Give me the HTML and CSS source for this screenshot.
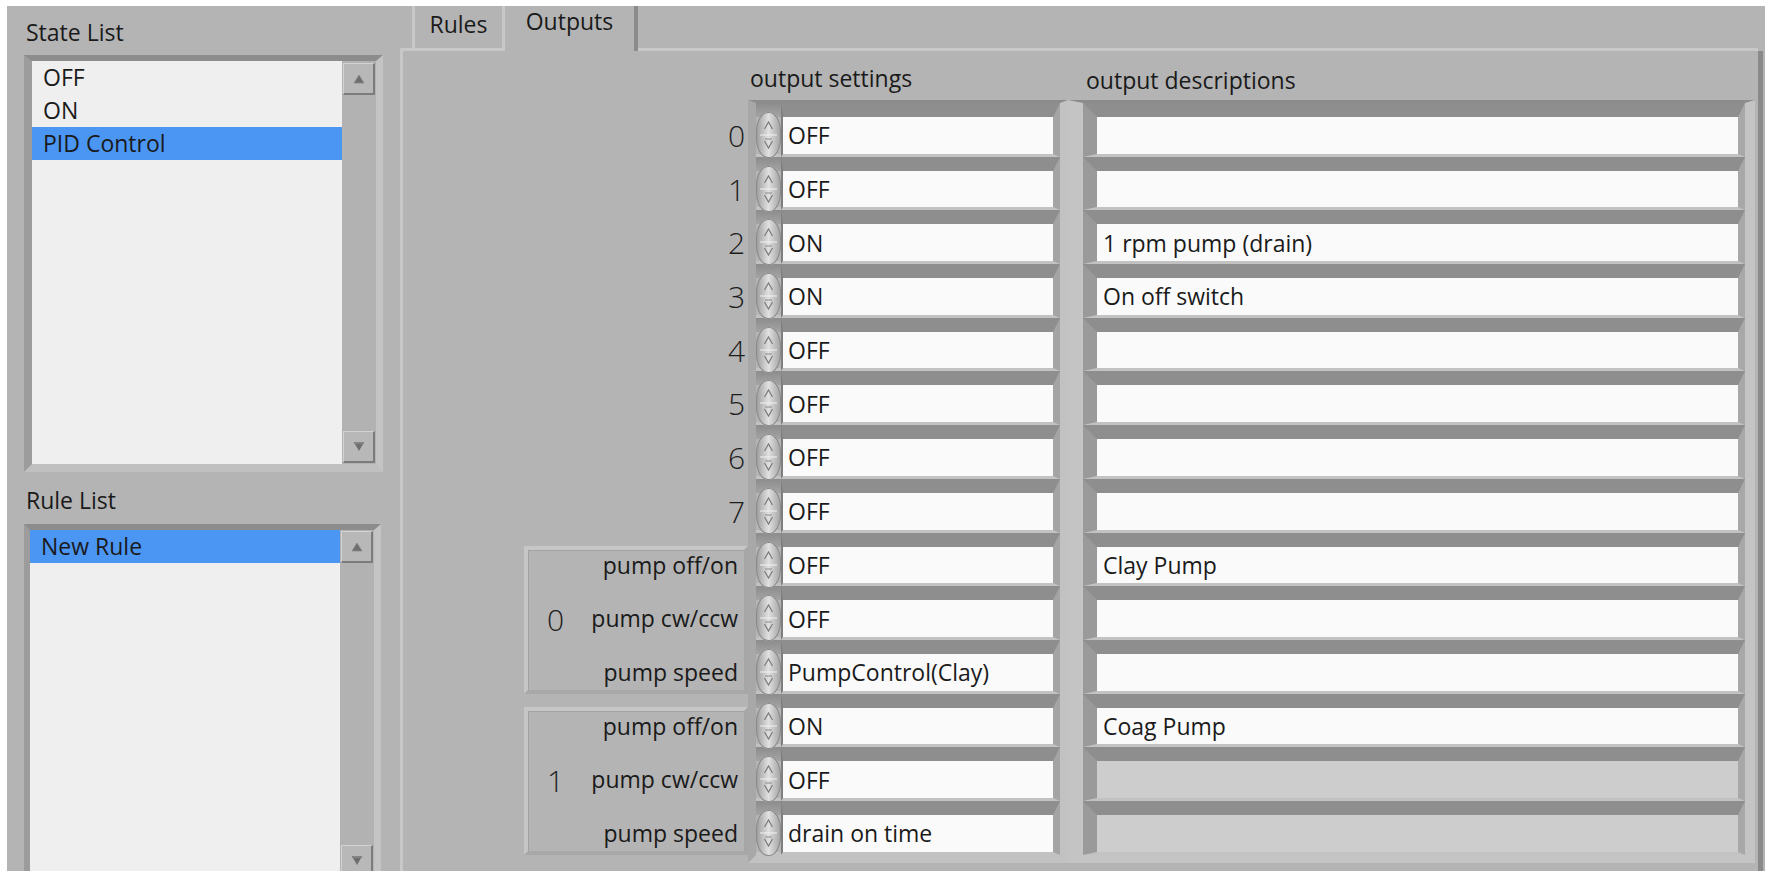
FILE: index.html
```html
<!DOCTYPE html>
<html>
<head>
<meta charset="utf-8">
<link rel="stylesheet" href="styles.css">
</head>
<body>
<div class="screen">
  <div class="left">
    <div class="plabel">State List</div>
    <div class="lframe state">
      <div class="litems">
        <div class="li">OFF</div>
        <div class="li">ON</div>
        <div class="li sel">PID Control</div>
      </div>
      <div class="sbar">
        <div class="sbtn"><svg width="12" height="10" viewBox="0 0 12 10"><polygon points="6,1 11,9 1,9" fill="#6e6e6e" stroke="#8a8a8a" stroke-width="0.8"/></svg></div>
        <div class="sbtn"><svg width="12" height="10" viewBox="0 0 12 10"><line x1="1" y1="1" x2="11" y2="1" stroke="#6e6e6e" stroke-width="1.4"/><polygon points="2,2 10,2 6,9" fill="#6e6e6e"/></svg></div>
      </div>
    </div>
    <div class="plabel rl">Rule List</div>
    <div class="lframe rule">
      <div class="litems">
        <div class="li sel">New Rule</div>
      </div>
      <div class="sbar">
        <div class="sbtn"><svg width="12" height="10" viewBox="0 0 12 10"><polygon points="6,1 11,9 1,9" fill="#6e6e6e" stroke="#8a8a8a" stroke-width="0.8"/></svg></div>
        <div class="sbtn"><svg width="12" height="10" viewBox="0 0 12 10"><line x1="1" y1="1" x2="11" y2="1" stroke="#6e6e6e" stroke-width="1.4"/><polygon points="2,2 10,2 6,9" fill="#6e6e6e"/></svg></div>
      </div>
    </div>
  </div>

  <div class="tabctl">
    <div class="tabstrip">
      <div class="tfill lead"></div>
      <div class="tab rules">Rules</div>
      <div class="tab outputs">Outputs</div>
      <div class="tfill rest"></div>
    </div>
    <div class="tabpanel">
      <div class="idxcol">
        <div class="idx">0</div>
        <div class="idx">1</div>
        <div class="idx">2</div>
        <div class="idx">3</div>
        <div class="idx">4</div>
        <div class="idx">5</div>
        <div class="idx">6</div>
        <div class="idx">7</div>
        <div class="clwrap">
          <div class="clbox">
            <div class="cldig">0</div>
            <div class="clabels">
              <div>pump off/on</div>
              <div>pump cw/ccw</div>
              <div>pump speed</div>
            </div>
          </div>
        </div>
        <div class="clwrap">
          <div class="clbox">
            <div class="cldig">1</div>
            <div class="clabels">
              <div>pump off/on</div>
              <div>pump cw/ccw</div>
              <div>pump speed</div>
            </div>
          </div>
        </div>
      </div>

      <div class="setcol">
        <div class="collbl">output settings</div>
        <div class="frame">
          <div class="srow"><div class="spin"><svg width="25" height="46" viewBox="0 0 25 46"><path d="M8.5 17 L12.5 10 L16.5 17" fill="none" stroke="#7a7a7a" stroke-width="1.2"/><line x1="4" y1="23" x2="21" y2="23" stroke="#f2f2f2" stroke-width="1"/><line x1="9" y1="27" x2="16" y2="27" stroke="#8a8a8a" stroke-width="1"/><path d="M8.5 29 L12.5 36 L16.5 29" fill="none" stroke="#7a7a7a" stroke-width="1.2"/></svg></div><div class="fld">OFF</div></div>
          <div class="srow"><div class="spin"><svg width="25" height="46" viewBox="0 0 25 46"><path d="M8.5 17 L12.5 10 L16.5 17" fill="none" stroke="#7a7a7a" stroke-width="1.2"/><line x1="4" y1="23" x2="21" y2="23" stroke="#f2f2f2" stroke-width="1"/><line x1="9" y1="27" x2="16" y2="27" stroke="#8a8a8a" stroke-width="1"/><path d="M8.5 29 L12.5 36 L16.5 29" fill="none" stroke="#7a7a7a" stroke-width="1.2"/></svg></div><div class="fld">OFF</div></div>
          <div class="srow"><div class="spin"><svg width="25" height="46" viewBox="0 0 25 46"><path d="M8.5 17 L12.5 10 L16.5 17" fill="none" stroke="#7a7a7a" stroke-width="1.2"/><line x1="4" y1="23" x2="21" y2="23" stroke="#f2f2f2" stroke-width="1"/><line x1="9" y1="27" x2="16" y2="27" stroke="#8a8a8a" stroke-width="1"/><path d="M8.5 29 L12.5 36 L16.5 29" fill="none" stroke="#7a7a7a" stroke-width="1.2"/></svg></div><div class="fld">ON</div></div>
          <div class="srow"><div class="spin"><svg width="25" height="46" viewBox="0 0 25 46"><path d="M8.5 17 L12.5 10 L16.5 17" fill="none" stroke="#7a7a7a" stroke-width="1.2"/><line x1="4" y1="23" x2="21" y2="23" stroke="#f2f2f2" stroke-width="1"/><line x1="9" y1="27" x2="16" y2="27" stroke="#8a8a8a" stroke-width="1"/><path d="M8.5 29 L12.5 36 L16.5 29" fill="none" stroke="#7a7a7a" stroke-width="1.2"/></svg></div><div class="fld">ON</div></div>
          <div class="srow"><div class="spin"><svg width="25" height="46" viewBox="0 0 25 46"><path d="M8.5 17 L12.5 10 L16.5 17" fill="none" stroke="#7a7a7a" stroke-width="1.2"/><line x1="4" y1="23" x2="21" y2="23" stroke="#f2f2f2" stroke-width="1"/><line x1="9" y1="27" x2="16" y2="27" stroke="#8a8a8a" stroke-width="1"/><path d="M8.5 29 L12.5 36 L16.5 29" fill="none" stroke="#7a7a7a" stroke-width="1.2"/></svg></div><div class="fld">OFF</div></div>
          <div class="srow"><div class="spin"><svg width="25" height="46" viewBox="0 0 25 46"><path d="M8.5 17 L12.5 10 L16.5 17" fill="none" stroke="#7a7a7a" stroke-width="1.2"/><line x1="4" y1="23" x2="21" y2="23" stroke="#f2f2f2" stroke-width="1"/><line x1="9" y1="27" x2="16" y2="27" stroke="#8a8a8a" stroke-width="1"/><path d="M8.5 29 L12.5 36 L16.5 29" fill="none" stroke="#7a7a7a" stroke-width="1.2"/></svg></div><div class="fld">OFF</div></div>
          <div class="srow"><div class="spin"><svg width="25" height="46" viewBox="0 0 25 46"><path d="M8.5 17 L12.5 10 L16.5 17" fill="none" stroke="#7a7a7a" stroke-width="1.2"/><line x1="4" y1="23" x2="21" y2="23" stroke="#f2f2f2" stroke-width="1"/><line x1="9" y1="27" x2="16" y2="27" stroke="#8a8a8a" stroke-width="1"/><path d="M8.5 29 L12.5 36 L16.5 29" fill="none" stroke="#7a7a7a" stroke-width="1.2"/></svg></div><div class="fld">OFF</div></div>
          <div class="srow"><div class="spin"><svg width="25" height="46" viewBox="0 0 25 46"><path d="M8.5 17 L12.5 10 L16.5 17" fill="none" stroke="#7a7a7a" stroke-width="1.2"/><line x1="4" y1="23" x2="21" y2="23" stroke="#f2f2f2" stroke-width="1"/><line x1="9" y1="27" x2="16" y2="27" stroke="#8a8a8a" stroke-width="1"/><path d="M8.5 29 L12.5 36 L16.5 29" fill="none" stroke="#7a7a7a" stroke-width="1.2"/></svg></div><div class="fld">OFF</div></div>
          <div class="srow"><div class="spin"><svg width="25" height="46" viewBox="0 0 25 46"><path d="M8.5 17 L12.5 10 L16.5 17" fill="none" stroke="#7a7a7a" stroke-width="1.2"/><line x1="4" y1="23" x2="21" y2="23" stroke="#f2f2f2" stroke-width="1"/><line x1="9" y1="27" x2="16" y2="27" stroke="#8a8a8a" stroke-width="1"/><path d="M8.5 29 L12.5 36 L16.5 29" fill="none" stroke="#7a7a7a" stroke-width="1.2"/></svg></div><div class="fld">OFF</div></div>
          <div class="srow"><div class="spin"><svg width="25" height="46" viewBox="0 0 25 46"><path d="M8.5 17 L12.5 10 L16.5 17" fill="none" stroke="#7a7a7a" stroke-width="1.2"/><line x1="4" y1="23" x2="21" y2="23" stroke="#f2f2f2" stroke-width="1"/><line x1="9" y1="27" x2="16" y2="27" stroke="#8a8a8a" stroke-width="1"/><path d="M8.5 29 L12.5 36 L16.5 29" fill="none" stroke="#7a7a7a" stroke-width="1.2"/></svg></div><div class="fld">OFF</div></div>
          <div class="srow"><div class="spin"><svg width="25" height="46" viewBox="0 0 25 46"><path d="M8.5 17 L12.5 10 L16.5 17" fill="none" stroke="#7a7a7a" stroke-width="1.2"/><line x1="4" y1="23" x2="21" y2="23" stroke="#f2f2f2" stroke-width="1"/><line x1="9" y1="27" x2="16" y2="27" stroke="#8a8a8a" stroke-width="1"/><path d="M8.5 29 L12.5 36 L16.5 29" fill="none" stroke="#7a7a7a" stroke-width="1.2"/></svg></div><div class="fld">PumpControl(Clay)</div></div>
          <div class="srow"><div class="spin"><svg width="25" height="46" viewBox="0 0 25 46"><path d="M8.5 17 L12.5 10 L16.5 17" fill="none" stroke="#7a7a7a" stroke-width="1.2"/><line x1="4" y1="23" x2="21" y2="23" stroke="#f2f2f2" stroke-width="1"/><line x1="9" y1="27" x2="16" y2="27" stroke="#8a8a8a" stroke-width="1"/><path d="M8.5 29 L12.5 36 L16.5 29" fill="none" stroke="#7a7a7a" stroke-width="1.2"/></svg></div><div class="fld">ON</div></div>
          <div class="srow"><div class="spin"><svg width="25" height="46" viewBox="0 0 25 46"><path d="M8.5 17 L12.5 10 L16.5 17" fill="none" stroke="#7a7a7a" stroke-width="1.2"/><line x1="4" y1="23" x2="21" y2="23" stroke="#f2f2f2" stroke-width="1"/><line x1="9" y1="27" x2="16" y2="27" stroke="#8a8a8a" stroke-width="1"/><path d="M8.5 29 L12.5 36 L16.5 29" fill="none" stroke="#7a7a7a" stroke-width="1.2"/></svg></div><div class="fld">OFF</div></div>
          <div class="srow"><div class="spin"><svg width="25" height="46" viewBox="0 0 25 46"><path d="M8.5 17 L12.5 10 L16.5 17" fill="none" stroke="#7a7a7a" stroke-width="1.2"/><line x1="4" y1="23" x2="21" y2="23" stroke="#f2f2f2" stroke-width="1"/><line x1="9" y1="27" x2="16" y2="27" stroke="#8a8a8a" stroke-width="1"/><path d="M8.5 29 L12.5 36 L16.5 29" fill="none" stroke="#7a7a7a" stroke-width="1.2"/></svg></div><div class="fld">drain on time</div></div>
        </div>
      </div>

      <div class="desccol">
        <div class="collbl">output descriptions</div>
        <div class="frame">
          <div class="fld"></div>
          <div class="fld"></div>
          <div class="fld">1 rpm pump (drain)</div>
          <div class="fld">On off switch</div>
          <div class="fld"></div>
          <div class="fld"></div>
          <div class="fld"></div>
          <div class="fld"></div>
          <div class="fld">Clay Pump</div>
          <div class="fld"></div>
          <div class="fld"></div>
          <div class="fld">Coag Pump</div>
          <div class="fld dis"></div>
          <div class="fld dis"></div>
        </div>
      </div>
    </div>
  </div>
</div>
</body>
</html>
```

FILE: styles.css
```css
body {
  margin: 0;
  background: #ffffff;
  font-family: "Open Sans", "Noto Sans", "DejaVu Sans", sans-serif;
  font-size: 23px;
  color: #1a1a1a;
}

.screen {
  margin: 6px 0 0 7px;
  width: 1758px;
  height: 865px;
  overflow: hidden;
  background: #b4b4b4;
  display: flex;
}

/* ---------- left panel ---------- */
.left {
  width: 393px;
  flex: none;
  padding-left: 17px;
  box-sizing: border-box;
  display: flex;
  flex-direction: column;
}

.plabel {
  margin-top: 11px;
  height: 31px;
  line-height: 31px;
  padding-left: 2px;
  flex: none;
}

.plabel.rl {
  margin-top: 13px;
}

.lframe {
  display: flex;
  flex: none;
  box-sizing: border-box;
  border-style: solid;
  border-color: #8c8c8c #c4c4c4 #c0c0c0 #9c9c9c;
}

.lframe.state {
  margin-top: 7px;
  width: 359px;
  height: 417px;
  border-width: 6px 7px 8px 8px;
}

.lframe.rule {
  margin-top: 8px;
  width: 357px;
  height: 362px;
  border-width: 6px 7px 8px 6px;
}

.litems {
  flex: 1;
  background: #efefef;
}

.li {
  height: 33px;
  line-height: 33px;
  padding-left: 11px;
  white-space: nowrap;
}

.li.sel {
  background: #4b96f3;
}

.sbar {
  width: 34px;
  flex: none;
  box-sizing: border-box;
  display: flex;
  flex-direction: column;
  justify-content: space-between;
  background: #b2b2b2;
  padding: 2px 0 1px 1px;
}

.rule .sbar {
  padding-top: 1px;
}

.sbtn {
  width: 32px;
  height: 32px;
  box-sizing: border-box;
  background: #b8b8b8;
  border-style: solid;
  border-width: 1px 2px 2px 1px;
  border-color: #d2d2d2 #7c7c7c #7c7c7c #d2d2d2;
  display: flex;
  align-items: center;
  justify-content: center;
}

/* ---------- tab control ---------- */
.tabctl {
  width: 1365px;
  flex: none;
  display: flex;
  flex-direction: column;
}

.tabstrip {
  height: 45px;
  flex: none;
  display: flex;
}

.tfill {
  border-bottom: 3px solid #c8c8c8;
}

.tfill.lead {
  width: 12px;
}

.tfill.rest {
  flex: 1;
  margin-right: 7px;
}

.tab {
  box-sizing: border-box;
  text-align: center;
  white-space: nowrap;
}

.tab.rules {
  width: 90px;
  border-left: 3px solid #c8c8c8;
  border-bottom: 3px solid #c8c8c8;
  padding-top: 3px;
  line-height: 31px;
}

.tab.outputs {
  width: 136px;
  border-left: 3px solid #c8c8c8;
  border-right: 4px solid #8c8c8c;
  line-height: 31px;
}

.tabpanel {
  flex: 1;
  display: flex;
  border-left: 3px solid #c8c8c8;
  border-right: 5px solid #8a8a8a;
  margin-right: 2px;
}

/* index column */
.idxcol {
  width: 345px;
  flex: none;
  padding-top: 52px;
  box-sizing: border-box;
}

.idx {
  height: 53.7px;
  box-sizing: border-box;
  padding: 14px 3px 3px 0;
  display: flex;
  align-items: center;
  justify-content: flex-end;
  font-size: 30px;
  font-weight: 300;
  color: #1e1e1e;
}

.clwrap {
  height: 161.1px;
  box-sizing: border-box;
  padding: 13px 0 0 121px;
  display: flex;
}

.clbox {
  flex: 1;
  display: flex;
  align-items: center;
  border: 4px solid;
  border-color: #c6c6c6 #a6a6a6 #a8a8a8 #c6c6c6;
  box-shadow: inset 1px 1px 0 #a2a2a2;
}

.cldig {
  margin-left: 19px;
  font-size: 30px;
  font-weight: 300;
  line-height: 40px;
  color: #1e1e1e;
}

.clabels {
  margin-left: auto;
  align-self: flex-start;
  display: flex;
  flex-direction: column;
  align-items: flex-end;
  gap: 22.7px;
  padding-right: 6px;
}

.clabels div {
  line-height: 31px;
  white-space: nowrap;
}

/* arrays */
.setcol {
  width: 320px;
  flex: none;
}

.desccol {
  width: 687px;
  flex: none;
}

.collbl {
  height: 49px;
  box-sizing: border-box;
  padding: 12px 0 0 2px;
  line-height: 30px;
  white-space: nowrap;
}

.desccol .collbl {
  padding-left: 18px;
  padding-top: 14px;
}

.frame {
  border-style: solid;
  border-width: 3px 8px 8px 8px;
  border-color: #8c8c8c #c2c2c2 #c2c2c2 #a8a8a8;
}

.desccol .frame {
  border-width: 3px 10px 8px 15px;
  border-color: #8c8c8c #c4c4c4 #c4c4c4 #c4c4c4;
}

.srow {
  height: 53.7px;
  display: flex;
  background: linear-gradient(#8c8c8c, #a4a4a4 14px, #b4b4b4 14px, #b4b4b4 calc(100% - 3px), #c2c2c2 calc(100% - 3px));
}

.spin {
  width: 25px;
  height: 46px;
  margin-top: 9px;
  flex: none;
  border-radius: 12px / 20px;
  background: linear-gradient(to right, #9a9a9a, #e0e0e0 50%, #a0a0a0);
  box-shadow: inset 0 0 0 1px #8a8a8a;
}

.spin svg {
  display: block;
}

.fld {
  flex: 1;
  box-sizing: border-box;
  border-style: solid;
  border-width: 14px 7px 3px 2px;
  border-color: #8e8e8e #a4a4a4 #c2c2c2 #7e7e7e;
  background: #fafafa;
  padding-left: 5px;
  display: flex;
  align-items: center;
  white-space: nowrap;
  overflow: hidden;
}

.desccol .fld {
  height: 53.7px;
  border-width: 14px 7px 3px 14px;
  border-color: #8e8e8e #a8a8a8 #c2c2c2 #9a9a9a;
  padding-left: 6px;
}

.desccol .fld.dis {
  background: #cdcdcd;
}
```
